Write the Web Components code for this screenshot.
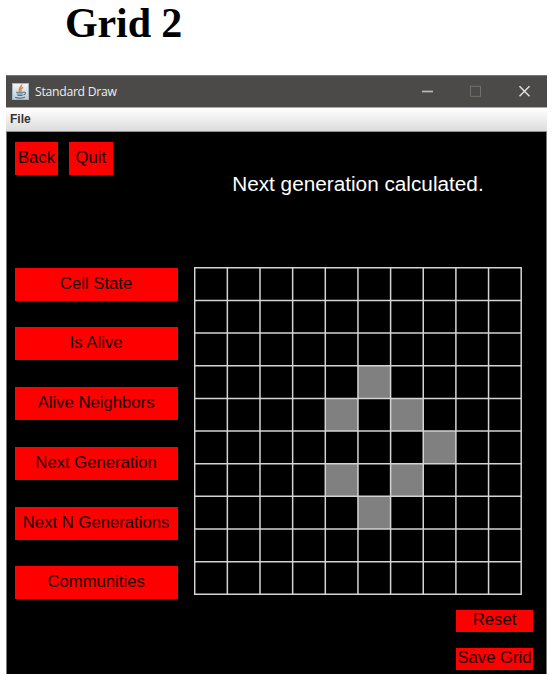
<!DOCTYPE html>
<html lang="en">
<head>
<meta charset="utf-8">
<title>Grid 2</title>
<style>
body { margin: 0; background: #fff; font-family: "Liberation Sans", Arial, sans-serif; }
</style>
</head>
<body>
<life-page></life-page>
<script>
class RedButton extends HTMLElement {
  constructor() {
    super();
    this.attachShadow({ mode: 'open' }).innerHTML = `
      <style>
        :host { display: block; box-sizing: border-box; height: 33px; background: #f00; color: #180000;
          font-size: 16.7px; line-height: 31px; text-align: center; white-space: nowrap; }
        :host([small]) { height: 22px; line-height: 20px; }
      </style><slot></slot>`;
  }
}
customElements.define('red-button', RedButton);

class TitleBar extends HTMLElement {
  constructor() {
    super();
    this.attachShadow({ mode: 'open' }).innerHTML = `
      <style>
        :host { display: flex; align-items: center; box-sizing: border-box; height: 32px; padding: 0 15px 0 6px;
          background: #4c4a48; border-top: 1px solid #777773; color: #eee;
          font: 12.2px "Open Sans", "Noto Sans", sans-serif; }
        .name { flex: 1; margin-left: 6px; letter-spacing: -.27px; white-space: nowrap; }
        svg { display: block; }
        .controls { margin-top: -2px; }
      </style>
      <svg width="17" height="17" viewBox="0 0 17 17">
        <defs><linearGradient id="g" x2="0" y2="1"><stop stop-color="#f4f6f7"/><stop offset="1" stop-color="#bccbd5"/></linearGradient></defs>
        <rect x=".5" y=".5" width="16" height="16" fill="url(#g)" stroke="#a7b7c2"/>
        <path d="M9.5 1.5C10.5 4 5.5 4.6 8 8.5M11.2 4.5C8.4 5.5 8.2 6.7 9.3 8.5" fill="none" stroke="#e08a45" stroke-width="1.6"/>
        <path d="M4 9.3h7.5M4.8 11h6M5.5 12.5h5M3 14.3c3 1.2 8 1 10-.3M11.5 9.2c3-.5 2.3 2.3 0 2.6" fill="none" stroke="#50768f" stroke-width="1.1"/>
      </svg>
      <span class="name"><slot></slot></span>
      <svg class="controls" width="110" height="14" viewBox="0 0 110 14" fill="none">
        <path d="M0 7.5h11" stroke="#bbb9b6" stroke-width="1.7"/>
        <rect x="48.5" y="2.3" width="10" height="10" stroke="#72706d"/>
        <path d="M97.5 2.3l10 10m0-10l-10 10" stroke="#e0dfdb" stroke-width="1.5"/>
      </svg>`;
  }
}
customElements.define('title-bar', TitleBar);

class MenuBar extends HTMLElement {
  constructor() {
    super();
    this.attachShadow({ mode: 'open' }).innerHTML = `
      <style>
        :host { display: block; box-sizing: border-box; height: 25px; padding-left: 4px;
          background: linear-gradient(#fff, #dcdcdc); border-top: 1px solid #aaa; border-bottom: 1px solid #929292;
          color: #333; font: bold 12px/22px "Liberation Sans", Arial, sans-serif; }
      </style><slot></slot>`;
  }
}
customElements.define('menu-bar', MenuBar);

class LifeGrid extends HTMLElement {
  connectedCallback() {
    const step = 32.65;
    const alive = [[5,3],[4,4],[6,4],[7,5],[4,6],[6,6],[5,7]];
    const cells = alive.map(([c, r]) =>
      `<rect x="${1 + c * step}" y="${1 + r * step}" width="${step}" height="${step}"/>`).join('');
    let lines = '';
    for (let i = 0; i <= 10; i++) {
      const p = 1 + i * step;
      lines += `M${p} .3V328.2M.3 ${p}H328.2`;
    }
    this.attachShadow({ mode: 'open' }).innerHTML = `
      <style>:host, svg { display: block; }</style>
      <svg width="329" height="329" viewBox="0.3 0.2 329 329">
        <g fill="#808080">${cells}</g>
        <path d="${lines}" stroke="#d4d4d4" stroke-width="1.5"/>
      </svg>`;
  }
}
customElements.define('life-grid', LifeGrid);

class LifePage extends HTMLElement {
  constructor() {
    super();
    this.attachShadow({ mode: 'open' }).innerHTML = `
      <style>
        :host { display: block; height: 687px; overflow: hidden; }
        h1 { margin: 0; height: 75px; box-sizing: border-box; padding: 0 0 0 65px;
          font: bold 42px/46px "Liberation Serif", "Times New Roman", serif; letter-spacing: -.1px; color: #000; }
        .window { width: 541px; margin-left: 6px; height: 599px; }
        .canvas { box-sizing: border-box; height: 542px; background: #000;
          border-left: 1px solid #777; border-right: 1px solid #777; }
        .top { display: flex; height: 135px; padding: 10px 0 0 7.6px; box-sizing: border-box; gap: 10.5px; }
        .top red-button { width: 43.8px; }
        .message { color: #fff; font-size: 20.75px; line-height: 24px; margin: 30px 0 0 109px; white-space: nowrap; }
        .main { display: flex; gap: 16px; padding-left: 7.6px; height: 343px; box-sizing: border-box; }
        .actions { width: 163px; display: flex; flex-direction: column; gap: 26.8px; padding-top: .5px; }
        .bottom { display: flex; flex-direction: column; align-items: flex-end; gap: 16px; padding-right: 13px; }
        .bottom red-button { width: 77px; }
      </style>
      <h1>Grid 2</h1>
      <div class="window">
        <title-bar>Standard Draw</title-bar>
        <menu-bar>File</menu-bar>
        <div class="canvas">
          <div class="top">
            <red-button>Back</red-button><red-button>Quit</red-button>
            <div class="message">Next generation calculated.</div>
          </div>
          <div class="main">
            <div class="actions">
              <red-button>Cell State</red-button>
              <red-button>Is Alive</red-button>
              <red-button>Alive Neighbors</red-button>
              <red-button>Next Generation</red-button>
              <red-button>Next N Generations</red-button>
              <red-button>Communities</red-button>
            </div>
            <life-grid></life-grid>
          </div>
          <div class="bottom">
            <red-button small>Reset</red-button>
            <red-button small>Save Grid</red-button>
          </div>
        </div>
      </div>`;
  }
}
customElements.define('life-page', LifePage);
</script>
</body>
</html>
